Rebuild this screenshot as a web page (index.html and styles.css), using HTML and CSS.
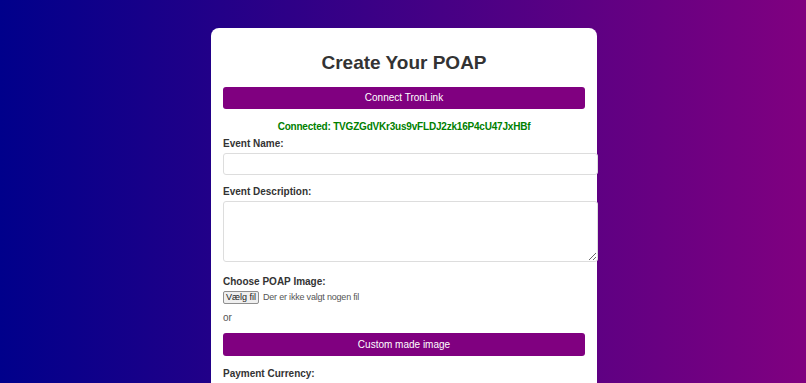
FILE: index.html
```html
<!DOCTYPE html>
<html>
<head>
    <link rel="stylesheet" href="styles.css">
</head>

<body>
    <div class="card">
        <h2 class="title">Create Your POAP</h2>
        <button class="btn" id="connect">Connect TronLink</button>
        <p class="status">Connected: TVGZGdVKr3us9vFLDJ2zk16P4cU47JxHBf</p>

        <div class="field first">
            <label for="name">Event Name:</label>
            <input type="text" id="name" class="text-input">
        </div>

        <div class="field">
            <label for="desc">Event Description:</label>
            <textarea id="desc" class="text-area"></textarea>
        </div>

        <div class="field image-field">
            <label>Choose POAP Image:</label>
            <div class="file-row">
                <span class="file-btn">Vælg fil</span>
                <span class="file-name">Der er ikke valgt nogen fil</span>
            </div>
        </div>

        <p class="or">or</p>
        <button class="btn custom" id="custom">Custom made image</button>

        <div class="field payment">
            <label for="currency">Payment Currency:</label>
            <select id="currency" class="select">
                <option>TRX</option>
                <option>USDT</option>
            </select>
        </div>
    </div>
</body>

</html>
```

FILE: styles.css
```css
html, body{
    margin: 0;
    min-height: 100%;
}
body{
    font-family: "Liberation Sans", Arial, sans-serif;
    background: linear-gradient(to right, #00008b, #800080);
    min-height: 383px;
    padding-top: 28px;
    box-sizing: border-box;
}
.card{
    width: 386px;
    box-sizing: border-box;
    margin: 0 0 0 calc(50% - 192px);
    padding: 24px 12px 20px;
    background-color: #fff;
    border-radius: 8px;
}
.title{
    margin: 0 0 13px;
    font-size: 19px;
    line-height: 22px;
    text-align: center;
    color: #333;
}
.btn{
    display: block;
    width: 100%;
    height: 22px;
    padding: 0;
    border: none;
    border-radius: 3px;
    background-color: #800080;
    color: #fff;
    font-family: inherit;
    font-size: 10px;
    line-height: 22px;
}
.status{
    margin: 12px 0 0;
    font-size: 10px;
    line-height: 12px;
    font-weight: bold;
    letter-spacing: -0.2px;
    color: #008000;
    text-align: center;
}
.field{
    margin-top: 11px;
}
.field.first{
    margin-top: 5px;
}
.field.image-field{
    margin-top: 14px;
}
.field.payment{
    margin-top: 12px;
}
.field label{
    display: block;
    margin-bottom: 3px;
    font-size: 10px;
    line-height: 12px;
    font-weight: bold;
    color: #333;
}
.text-input{
    display: block;
    width: 100%;
    height: 20px;
    padding: 0 6px 0 5px;
    border: 1px solid #ddd;
    border-radius: 3px;
    font-family: inherit;
    font-size: 10px;
}
.text-area{
    display: block;
    width: 100%;
    height: 59px;
    padding: 0 6px 0 5px;
    border: 1px solid #ddd;
    border-radius: 3px;
    font-family: inherit;
    font-size: 10px;
}
.file-row{
    display: flex;
    align-items: center;
    gap: 4px;
    height: 12px;
}
.file-btn{
    box-sizing: border-box;
    width: 36px;
    height: 13px;
    border: 1px solid #8f8f8f;
    border-radius: 2px;
    background-color: #efefef;
    font-size: 9px;
    line-height: 11px;
    text-align: center;
    color: #222;
}
.file-name{
    font-size: 9px;
    letter-spacing: -0.2px;
    color: #555;
}
.or{
    margin: 9px 0 0;
    font-size: 10px;
    line-height: 12px;
    color: #555;
}
.custom{
    margin-top: 9px;
    height: 23px;
    line-height: 23px;
}
.select{
    width: 73px;
    height: 20px;
    border: 1px solid #999;
    border-radius: 3px;
    font-family: inherit;
    font-size: 10px;
}
```
